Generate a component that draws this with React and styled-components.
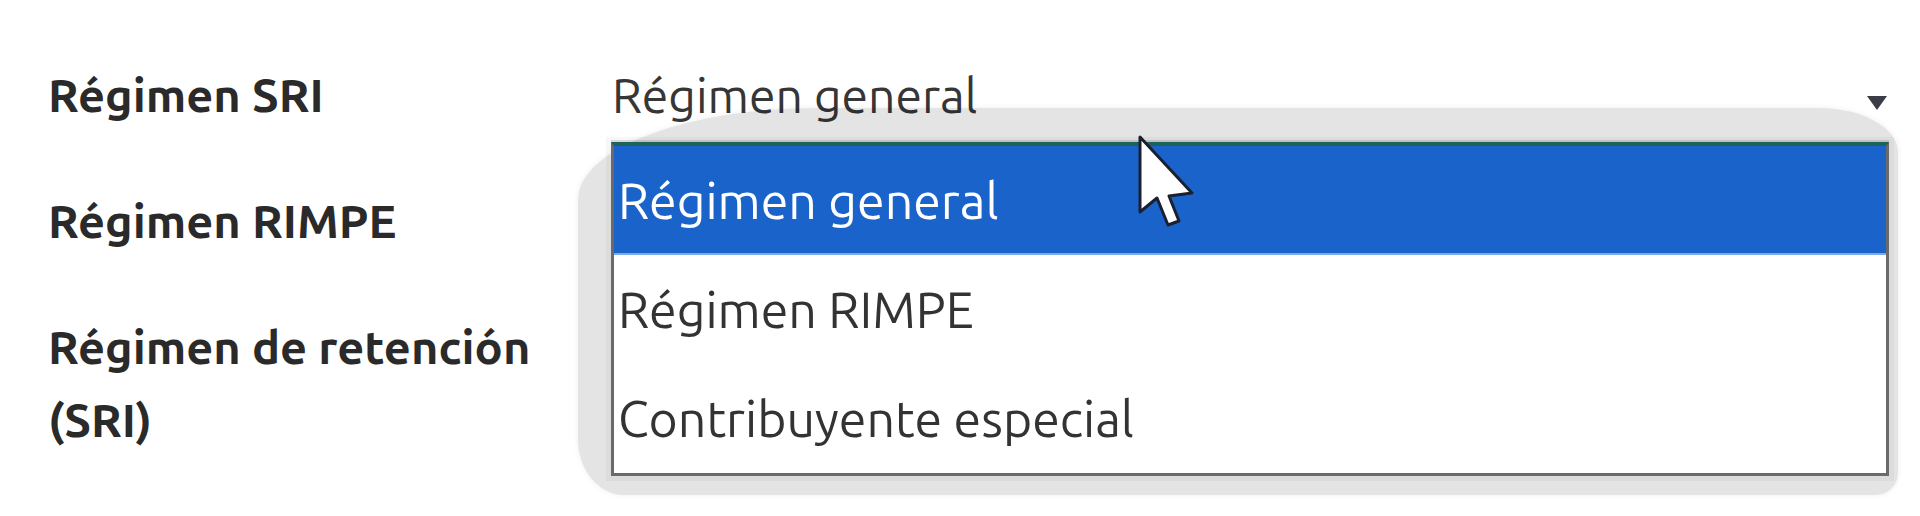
import React from "react";
import styled, { createGlobalStyle } from "styled-components";

const Global = createGlobalStyle`
  html, body { margin: 0; padding: 0; background: #ffffff; }
  body { font-family: Ubuntu, Roboto, "Noto Sans", sans-serif; }
  #root { width: 1920px; height: 516px; overflow: hidden; }
`;

const Form = styled.div`
  display: grid;
  grid-template-columns: 563px 1fr;
  row-gap: 53px;
  padding: 58px 31px 0 48px;
`;

const Label = styled.div`
  font-weight: 700;
  font-size: 47px;
  line-height: 73px;
  color: #2a2a2a;
`;

const Field = styled.div`
  position: relative;
  min-height: 73px;
`;

const Select = styled.div`
  position: relative;
  display: flex;
  align-items: center;
  justify-content: space-between;
  height: 73px;
  padding-left: 1px;
  font-size: 48px;
  color: #363636;
`;

const Arrow = styled.svg`
  align-self: flex-start;
  width: 22px;
  height: 16px;
  margin: 37px 1px 0 0;
`;

const Popup = styled.div`
  position: absolute;
  top: 50px;
  left: -33px;
  right: -9px;
  z-index: 5;
  padding: 34px 9px 19px 33px;
  background: rgba(0, 0, 0, 0.105);
  border-radius: 240px 80px 22px 46px / 92px 44px 22px 56px;
  box-shadow: 0 0 5px 1px rgba(0, 0, 0, 0.05);
`;

const List = styled.ul`
  list-style: none;
  margin: 0;
  padding: 0;
  background: #ffffff;
  border: 3px solid #6a6a6a;
  border-top: 4px solid #1f625c;
  box-shadow: 0 -2px 0 0 rgba(0, 0, 0, 0.12), 0 0 0 5px rgba(0, 0, 0, 0.03);
`;

const Item = styled.li`
  height: 109px;
  line-height: 109px;
  padding: 0 0 0 4px;
  box-sizing: border-box;
  font-size: 50px;
  color: ${(p) => (p.$active ? "#ffffff" : "#333333")};
  background: ${(p) => (p.$active ? "#1a63cb" : "transparent")};
  border-bottom: ${(p) => (p.$active ? "2px solid #7fa9e6" : "0")};
  white-space: nowrap;
`;

const Cursor = styled.svg`
  position: absolute;
  left: 560px;
  top: 27px;
  width: 60px;
  height: 100px;
  overflow: visible;
`;

const options = ["Régimen general", "Régimen RIMPE", "Contribuyente especial"];

export default function App() {
  return (
    <>
      <Global />
      <Form>
        <Label>Régimen SRI</Label>
        <Field>
          <Select>
            <span>Régimen general</span>
            <Arrow viewBox="0 0 22 16">
              <polygon points="1,1 21,1 11,15" fill="#3a3d45" />
            </Arrow>
            <Popup>
              <List>
                {options.map((o, i) => (
                  <Item key={o} $active={i === 0}>
                    {o}
                  </Item>
                ))}
              </List>
              <Cursor viewBox="0 0 60 100">
                <path
                  d="M2 2 L2 77 L19 63 L30 90 L41 86 L31 61 L54 58 Z"
                  fill="#ffffff"
                  stroke="#1b2030"
                  strokeWidth="3"
                  strokeLinejoin="round"
                />
              </Cursor>
            </Popup>
          </Select>
        </Field>
        <Label>Régimen RIMPE</Label>
        <Field />
        <Label>Régimen de retención (SRI)</Label>
        <Field />
      </Form>
    </>
  );
}
